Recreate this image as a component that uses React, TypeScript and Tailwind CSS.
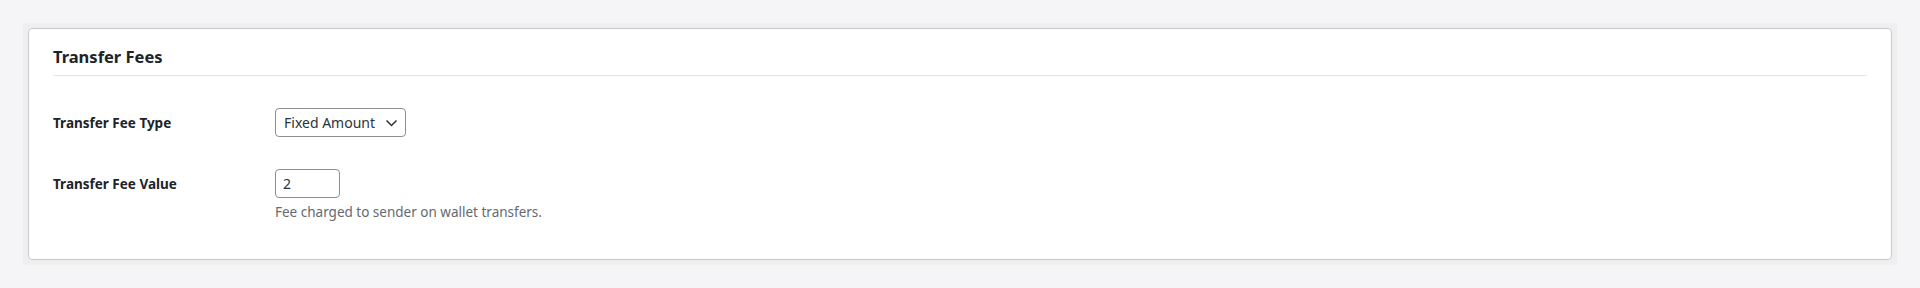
import { useState } from 'react';

// Settings card: Transfer Fees
export default function App() {
  const [feeType, setFeeType] = useState('fixed');
  const [feeValue, setFeeValue] = useState('2');

  return (
    <div className="min-h-screen bg-[#f5f5f7] px-[23px] pt-[23px] pb-6 font-['Noto_Sans',sans-serif] text-[#1d2327]">
      <div className="bg-[#efeff0] p-[5px]">
        <div className="rounded-[4px] border border-[#c8c9cc] bg-white px-6 pb-[38px]">
          {/* --- Section title --- */}
          <h2 className="border-b border-[#e2e3e5] pt-4 pb-[6px] text-[16.5px] font-bold leading-[24px]">
            Transfer Fees
          </h2>

          {/* --- Fee type --- */}
          <div className="mt-8 flex items-center">
            <label className="w-[222px] text-[13.5px] font-bold leading-[18px]">Transfer Fee Type</label>
            <div className="relative">
              <select
                value={feeType}
                onChange={(e) => setFeeType(e.target.value)}
                className="h-[29px] w-[131px] appearance-none rounded-[4px] border border-[#8c8f94] bg-white pl-2 pr-6 text-[14px] leading-[27px] text-[#2c3338] outline-none"
              >
                <option value="fixed">Fixed Amount</option>
                <option value="percent">Percentage</option>
              </select>
              <svg
                className="pointer-events-none absolute right-2 top-1/2 -translate-y-1/2"
                width="13"
                height="8"
                viewBox="0 0 13 8"
                fill="none"
              >
                <path d="M1.5 1.5L6.5 6.5L11.5 1.5" stroke="#2c3338" strokeWidth="1.5" />
              </svg>
            </div>
          </div>

          {/* --- Fee value --- */}
          <div className="mt-8 flex items-start">
            <label className="flex h-[29px] w-[222px] items-center text-[13.5px] font-bold leading-[18px]">
              Transfer Fee Value
            </label>
            <div className="flex flex-col">
              <input
                type="text"
                value={feeValue}
                onChange={(e) => setFeeValue(e.target.value)}
                className="h-[29px] w-[65px] rounded-[4px] border border-[#8c8f94] bg-white px-[7px] text-[14px] text-[#2c3338] outline-none"
              />
              <p className="mt-[5px] text-[13.5px] leading-[18px] text-[#646970]">
                Fee charged to sender on wallet transfers.
              </p>
            </div>
          </div>
        </div>
      </div>
    </div>
  );
}
